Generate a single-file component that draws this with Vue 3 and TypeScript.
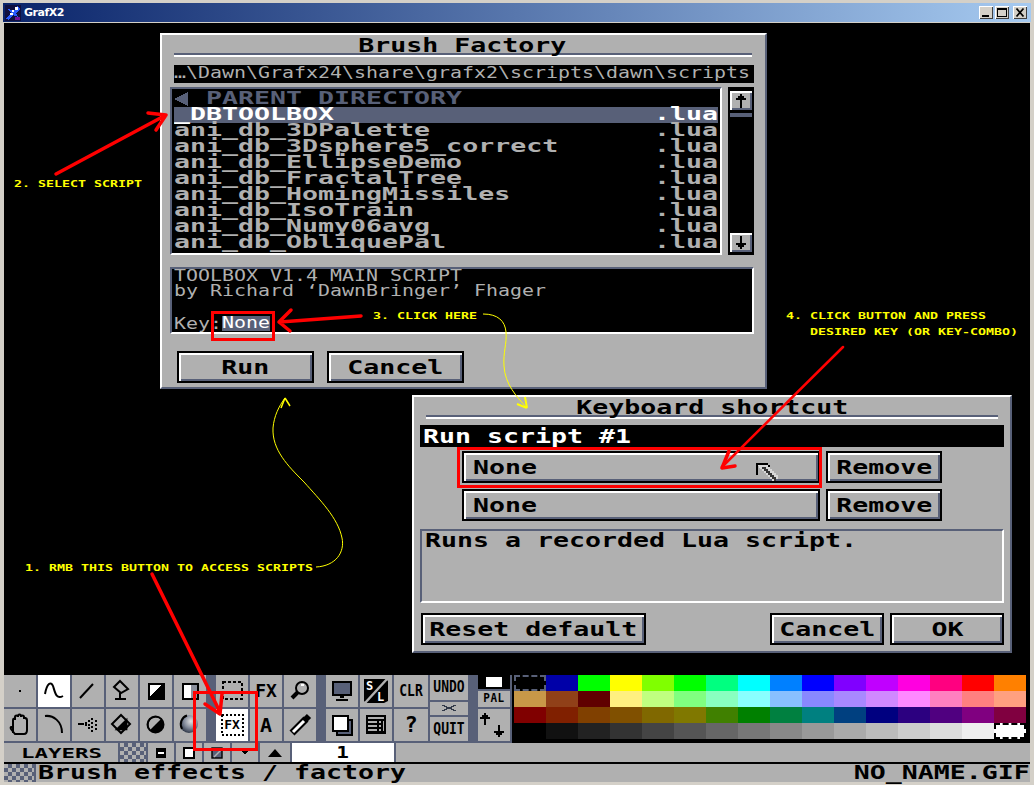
<script setup lang="ts">
const files = [
  'ani_db_3DPalette',
  'ani_db_3Dsphere5_correct',
  'ani_db_EllipseDemo',
  'ani_db_FractalTree',
  'ani_db_HomingMissiles',
  'ani_db_IsoTrain',
  'ani_db_Numy06avg',
  'ani_db_ObliquePal'
]

const palette = [
  '#000000', '#0000a8', '#00ff00', '#ffff00', '#80ff00', '#00ff00', '#00ff80', '#00ffff',
  '#0080ff', '#0000ff', '#8000ff', '#c000ff', '#ff00e0', '#ff0080', '#ff0000', '#ff8000',
  '#c89848', '#904018', '#600000', '#fff080', '#c0ff80', '#80ff80', '#88ffc0', '#88ffff',
  '#88c0ff', '#8888ff', '#a888ff', '#d088ff', '#ff88ff', '#ff80c0', '#ff8080', '#ffa080',
  '#800000', '#802000', '#804000', '#805000', '#806800', '#807800', '#408000', '#008000',
  '#008040', '#008080', '#004080', '#000080', '#2c0080', '#500080', '#800080', '#800040',
  '#000000', '#111111', '#222222', '#333333', '#444444', '#555555', '#666666', '#777777',
  '#888888', '#999999', '#aaaaaa', '#bbbbbb', '#cccccc', '#dddddd', '#eeeeee', '#ffffff'
]
</script>

<template>
  <div class="win">
    <div class="titlebar">
      <svg class="appicon" viewBox="0 0 16 16" shape-rendering="crispEdges">
        <rect width="16" height="16" fill="#101040" />
        <path d="M1 14 L6 8 L3 4 L9 6 L12 1 L15 4 L11 8 L13 12 L8 10 L4 15Z" fill="#2a5cff" />
        <path d="M10 2h3v3h-3zM5 8h3v2H5zM7 5h2v2H7z" fill="#fff" />
        <path d="M10 12h5v3h-5z" fill="#70109a" />
      </svg>
      <span class="apptitle">GrafX2</span>
      <div class="winbtns">
        <div class="wb"><svg viewBox="0 0 14 13" shape-rendering="crispEdges"><path d="M3 9h7v2H3z" /></svg></div>
        <div class="wb"><svg viewBox="0 0 14 13" shape-rendering="crispEdges"><path d="M2 2h10v9H2zM3 4v6h8V4z" fill-rule="evenodd" /></svg></div>
        <div class="wb close"><svg viewBox="0 0 14 13"><path d="M3.500 2.500l7 8M10.500 2.500l-7 8" stroke="#000" stroke-width="1.800" /></svg></div>
      </div>
    </div>

    <div class="client">
      <div class="canvas"></div>

      <div class="toolbar">
        <div class="tools six">
          <div class="c"><svg class="ic" viewBox="0 0 32 32" shape-rendering="crispEdges"><rect x="15" y="15" width="2" height="2" /></svg></div>
          <div class="c sel"><svg class="ic" viewBox="0 0 32 32"><path d="M7 19C9 8 13 6 15 11C17 17 18 25 25 21" class="ln" /></svg></div>
          <div class="c"><svg class="ic" viewBox="0 0 32 32"><path d="M8 23L21 9" class="ln" /></svg></div>
          <div class="c"><svg class="ic" viewBox="0 0 32 32"><path d="M14 6L22 14L15 18L8 12ZM14 18V23M9 24H20" class="ln" /></svg></div>
          <div class="c"><svg class="ic" viewBox="0 0 32 32" shape-rendering="crispEdges"><rect x="8" y="8" width="17" height="17" /><path d="M10 10h11L10 21z" fill="#fff" /></svg></div>
          <div class="c"><svg class="ic" viewBox="0 0 32 32" shape-rendering="crispEdges"><rect x="8" y="8" width="17" height="17" /><rect x="10" y="10" width="7" height="13" fill="#fff" /><rect x="17" y="10" width="6" height="13" fill="#8a8f9c" /></svg></div>
          <div class="c"><svg class="ic" viewBox="0 0 32 32"><path d="M9 24V11C9 9 11 9 11 11V8C11 6 14 6 14 8V7C14 5 17 5 17 7V8C17 6 20 6 20 8V10C20 8 23 9 23 11V21C23 24 22 25 20 25H11L7 20C6 18 8 17 9 19" class="ln" /></svg></div>
          <div class="c"><svg class="ic" viewBox="0 0 32 32"><path d="M7 7C15 6 24 12 24 24" class="ln" /></svg></div>
          <div class="c"><svg class="ic" viewBox="0 0 32 32" shape-rendering="crispEdges"><path d="M6 14h6v2H6zM13 13h2v4h-2zM16 11h2v2h-2zM16 15h2v2h-2zM16 18h2v2h-2zM19 9h2v2h-2zM19 13h2v2h-2zM19 17h2v2h-2zM19 21h2v2h-2zM23 11h2v2h-2zM23 15h2v2h-2zM23 19h2v2h-2z" /></svg></div>
          <div class="c"><svg class="ic" viewBox="0 0 32 32"><path d="M15 6L24 15L15 24L6 15Z" fill="none" stroke="#000" stroke-width="2" /><path d="M15 6L24 15L15 24Z" transform="rotate(45 15 15)" /></svg></div>
          <div class="c"><svg class="ic" viewBox="0 0 32 32"><circle cx="15.500" cy="15.500" r="8" fill="#000" /><path d="M10 21C7 16 9 10 14 9C17 8 19 9 21 10Z" fill="#b0b0b0" /><circle cx="15.500" cy="15.500" r="8" fill="none" stroke="#000" stroke-width="2" /></svg></div>
          <div class="c">
            <svg class="ic" viewBox="0 0 32 32">
              <defs>
                <radialGradient id="ball" cx="0.6" cy="0.35" r="0.7">
                  <stop offset="0" stop-color="#e0e0e0" />
                  <stop offset="0.55" stop-color="#808898" />
                  <stop offset="1" stop-color="#283040" />
                </radialGradient>
              </defs>
              <circle cx="15" cy="15" r="9" fill="url(#ball)" />
              <path d="M8 20C5 14 8 8 13 6.500" fill="none" stroke="#000" stroke-width="2" />
            </svg>
          </div>
        </div>

        <div class="tools three">
          <div class="c"><svg class="ic" viewBox="0 0 32 32" shape-rendering="crispEdges"><rect x="7" y="7" width="19" height="17" fill="none" stroke="#000" stroke-width="2" stroke-dasharray="3 2" /></svg></div>
          <div class="c"><span class="fx">FX</span></div>
          <div class="c"><svg class="ic" viewBox="0 0 32 32"><circle cx="18" cy="13" r="6" fill="#b0b0b0" stroke="#000" stroke-width="2" /><path d="M14 17L8 23" stroke="#000" stroke-width="4" /><path d="M17 10h3" stroke="#fff" stroke-width="2" /></svg></div>
          <div class="c sel">
            <svg class="ic" viewBox="0 0 32 32" shape-rendering="crispEdges"><rect x="6" y="6" width="21" height="20" fill="none" stroke="#000" stroke-width="2" stroke-dasharray="2 2" /></svg>
            <span class="fx small">FX</span>
          </div>
          <div class="c"><span class="fx big">A</span></div>
          <div class="c"><svg class="ic" viewBox="0 0 32 32"><path d="M8 24L22 10" stroke="#000" stroke-width="7" /><path d="M9 23L20 12" stroke="#fff" stroke-width="3" /><path d="M21 11L25 7" stroke="#000" stroke-width="6" /></svg></div>
        </div>

        <div class="tools sys">
          <div class="c"><svg class="ic" viewBox="0 0 32 32" shape-rendering="crispEdges"><rect x="6" y="6" width="20" height="15" /><rect x="8" y="8" width="16" height="11" fill="#586078" /><path d="M14 21h4v2h-4zM10 24h12v2H10z" /></svg></div>
          <div class="c">
            <svg class="ic" viewBox="0 0 32 32">
              <path d="M4 4H26L28 6V26L24 28H6L4 26Z" />
              <path d="M27 4L5 28" stroke="#b0b0b0" stroke-width="2.500" />
              <text x="6" y="15" class="sl">S</text>
              <text x="17" y="26" class="sl">L</text>
            </svg>
          </div>
          <div class="c wide"><span class="mini">CLR</span></div>
          <div class="c"><svg class="ic" viewBox="0 0 32 32" shape-rendering="crispEdges"><rect x="11" y="11" width="15" height="15" fill="#586078" stroke="#000" stroke-width="2" /><rect x="7" y="7" width="15" height="15" fill="#fff" stroke="#000" stroke-width="2" /></svg></div>
          <div class="c"><svg class="ic" viewBox="0 0 32 32" shape-rendering="crispEdges"><rect x="6" y="6" width="20" height="19" /><path d="M8 8h16v2H8zM8 12h9v2H8zM8 16h9v2H8zM8 20h9v2H8zM19 12h2v2h-2zM19 16h2v2h-2zM19 20h2v2h-2zM23 12h1v10h-1z" fill="#b0b0b0" /></svg></div>
          <div class="c wide"><span class="fx q">?</span></div>
        </div>

        <div class="undo">
          <div class="c u1"><span class="mini">UNDO</span></div>
          <div class="c u2"><svg width="16" height="8" viewBox="0 0 16 8" shape-rendering="crispEdges"><path d="M1 1h3v1h2v1h4V2h2V1h3v1h-2v1h-2v2h2v1h2v1h-3V6h-2V5H6v1H4v1H1V6h2V5h2V3H3V2H1z" fill="#303848" /></svg></div>
          <div class="c u1"><span class="mini">QUIT</span></div>
        </div>

        <div class="pal-side">
          <div class="fore"><div class="fore-box"></div></div>
          <div class="c pal-label"><span class="mini tiny">PAL</span></div>
          <div class="c pal-arrows">
            <svg viewBox="0 0 32 32" width="32" height="32" shape-rendering="crispEdges"><path d="M7 4h2v2h2v2h2v2H9v6H7v-6H3V8h2V6h2zM21 16h2v6h4v2h-2v2h-2v2h-2v-2h-2v-2h-2v-2h4z" transform="translate(-1 0)" /></svg>
          </div>
        </div>

        <div class="palette">
          <div
            v-for="(col, i) in palette"
            :key="i"
            class="sw"
            :class="{ 'sw-first': i === 0, 'sw-last': i === 63 }"
            :style="{ background: col }"
          ></div>
        </div>
      </div>

      <div class="layers">
        <div class="lay-title"><span class="t lay">LAYERS</span></div>
        <div class="lay-check"></div>
        <div class="lb"><svg width="12" height="12" viewBox="0 0 12 12" shape-rendering="crispEdges"><rect x="1" y="1" width="10" height="10" rx="1" /><rect x="3" y="5" width="6" height="2" fill="#fff" /></svg></div>
        <div class="lb"><svg width="12" height="12" viewBox="0 0 12 12" shape-rendering="crispEdges"><rect x="1" y="1" width="10" height="10" fill="#fff" stroke="#000" stroke-width="2" /></svg></div>
        <div class="lb"><svg width="12" height="12" viewBox="0 0 12 12"><rect x="1" y="1" width="10" height="10" fill="#586078" stroke="#000" stroke-width="1.400" /><path d="M3 10L10 3" stroke="#b0b0b0" stroke-width="1.400" /></svg></div>
        <div class="lb"><svg width="14" height="12" viewBox="0 0 14 12" shape-rendering="crispEdges"><path d="M1 1h12L7 8z" /><rect x="2" y="1" width="10" height="2" /></svg></div>
        <div class="lb lb-last"><svg width="14" height="12" viewBox="0 0 14 12"><path d="M0 10L7 2L14 10z" /></svg></div>
        <div class="lay-num"><span class="t c-t">1</span></div>
        <div class="lay-rest"></div>
      </div>

      <div class="status">
        <div class="stat-check"></div>
        <span class="t">Brush effects / factory</span>
        <span class="t end">NO_NAME.GIF</span>
      </div>
    </div>

    <div class="dlg brush">
      <div class="dtitle"><span class="t c-t">Brush Factory</span></div>
      <div class="sep"></div>
      <div class="path"><span class="t narrow thin">…\Dawn\Grafx24\share\grafx2\scripts\dawn\scripts</span></div>
      <div class="files">
        <div class="list">
          <div class="row parent">
            <svg class="back" viewBox="0 0 16 16" shape-rendering="crispEdges"><path d="M0 8L14 1V15Z" fill="#586078" /></svg>
            <span class="t">PARENT DIRECTORY</span>
          </div>
          <div class="row current">
            <span class="t">_DBTOOLBOX</span>
            <span class="t end">.lua</span>
          </div>
          <div v-for="f in files" :key="f" class="row">
            <span class="t">{{ f }}</span>
            <span class="t end">.lua</span>
          </div>
        </div>
        <div class="scroll">
          <div class="sbtn"><svg width="14" height="15" viewBox="0 0 14 15" shape-rendering="crispEdges"><path d="M6 1h2v2h2v2h2v2H8v8H6V7H2V5h2V3h2z" /></svg></div>
          <div class="thumb"></div>
          <div class="sbtn last"><svg width="14" height="15" viewBox="0 0 14 15" shape-rendering="crispEdges"><path d="M6 1h2v7h4v2h-2v2H8v2H6v-2H4v-2H2V8h4z" /></svg></div>
        </div>
      </div>
      <div class="desc">
        <div class="dline first"><span class="t narrow thin">TOOLBOX V1.4 MAIN SCRIPT</span></div>
        <div class="dline"><span class="t narrow thin">by Richard ‘DawnBringer’ Fhager</span></div>
        <div class="dline"></div>
        <div class="dline">
          <div class="keylabel"><span class="t narrow thin">Key:</span></div>
          <div class="keyval"><span class="t narrow thin">None</span></div>
        </div>
      </div>
      <div class="actions">
        <div class="btn b137"><span class="t c-t">Run</span></div>
        <div class="btn b137"><span class="t c-t">Cancel</span></div>
      </div>
    </div>

    <div class="dlg keys">
      <div class="dtitle"><span class="t c-t">Keyboard shortcut</span></div>
      <div class="sep"></div>
      <div class="cmd"><span class="t">Run script #1</span></div>
      <div class="keyrow">
        <div class="btn keybtn"><span class="t">None</span></div>
        <div class="btn remove"><span class="t c-t">Remove</span></div>
      </div>
      <div class="keyrow second">
        <div class="btn keybtn"><span class="t">None</span></div>
        <div class="btn remove"><span class="t c-t">Remove</span></div>
      </div>
      <div class="help"><span class="t">Runs a recorded Lua script.</span></div>
      <div class="foot">
        <div class="btn reset"><span class="t c-t">Reset default</span></div>
        <div class="btn b114 push"><span class="t c-t">Cancel</span></div>
        <div class="btn b114"><span class="t c-t">OK</span></div>
      </div>
    </div>

    <svg class="marks" viewBox="0 0 1034 785" width="1034" height="785">
      <g fill="none" stroke="#ffff00" stroke-width="1">
        <path d="M316 567C336 566 345 552 342 538C338 518 320 500 304 482C288 466 272 450 273 428C274 416 279 406 285 398" />
        <path d="M285 398L281 408M285 398L290 406" stroke-width="1.500" />
        <path d="M483 314C498 314 505 321 506 332C507 344 503 352 504 366C505 384 516 396 527 408" />
        <path d="M527 408L517 404M527 408L525 397" stroke-width="2" />
      </g>
      <g fill="none" stroke="#ff0000" stroke-width="3">
        <rect x="212.500" y="312.500" width="61" height="27" />
        <rect x="458.500" y="448.500" width="362" height="38" />
        <rect x="194.500" y="692.500" width="62" height="57" />
      </g>
      <g fill="none" stroke="#ff0000" stroke-width="3.500" stroke-linecap="round">
        <path d="M152 574L220 712M220 714L205 704M220 714L222 694" />
        <path d="M56 174L166 115M166 115L148 113M166 115L156 130" />
        <path d="M361 316L280 322M279 322L291 310M279 322L290 331" />
        <path d="M843 347L722 467" stroke-width="2.500" />
        <path d="M722 468L735 466M722 468L729 451" />
      </g>
      <g shape-rendering="crispEdges">
        <path d="M756 463h12v2h2v2h-2v-2h-10v10h-2z" fill="#000" />
        <path d="M758 465h10v2h2v2h2v2h2v2h2v2h2v4h-2v2h-4v-2h-2v-2h-2v-2h-2v-2h-2v-2h-2v-2h-2z" fill="#d8d8d8" />
        <path d="M760 467h2v2h2v2h2v2h2v2h2v2h2v2h2v2h2v-4h-2v-2h-2v-2h-2v-2h-2v-2h-2v-2h-6z" fill="#000" opacity="0.75" />
      </g>
    </svg>

    <span class="note n2">2. SELECT SCRIPT</span>
    <span class="note n3">3. CLICK HERE</span>
    <span class="note n4a">4. CLICK BUTTON AND PRESS</span>
    <span class="note n4b">DESIRED KEY (OR KEY-COMBO)</span>
    <span class="note n1">1. RMB THIS BUTTON TO ACCESS SCRIPTS</span>
  </div>
</template>

<style>
body {
  margin: 0;
  background: #000;
}
</style>

<style scoped>
.win {
  position: relative;
  width: 1034px;
  height: 785px;
  overflow: hidden;
  box-sizing: border-box;
  padding: 3px 4px 3px 4px;
  background: #d4d0c8;
  display: flex;
  flex-direction: column;
  font-family: 'Liberation Sans', sans-serif;
}

.titlebar {
  flex: none;
  height: 19px;
  margin: 0 -1px 1px -1px;
  padding-left: 2px;
  display: flex;
  align-items: center;
  background: linear-gradient(90deg, #0a246a, #a6caf0);
}

.appicon {
  width: 16px;
  height: 16px;
}

.apptitle {
  margin-left: 3px;
  font-family: 'DejaVu Sans', sans-serif;
  color: #fff;
  font-size: 11px;
  font-weight: bold;
  letter-spacing: -0.5px;
}

.winbtns {
  margin-left: auto;
  margin-right: 4px;
  display: flex;
  gap: 2px;
}

.wb {
  box-sizing: border-box;
  width: 14px;
  height: 13px;
  background: #d4d0c8;
  box-shadow: inset 1px 1px 0 #fff, inset -1px -1px 0 #404040;
}

.wb svg {
  display: block;
  width: 14px;
  height: 13px;
}

.close {
  margin-left: 2px;
}

.client {
  flex: 1;
  min-height: 0;
  display: flex;
  flex-direction: column;
  background: #000;
}

.canvas {
  flex: 1;
  background: #000;
}

/* the pixel font is wider than anything installed: stretch a mono face to its 16px grid */
.t {
  display: inline-block;
  font-family: 'DejaVu Sans Mono', 'Liberation Mono', monospace;
  font-size: 19px;
  font-weight: bold;
  line-height: 16px;
  white-space: pre;
  transform: scaleX(1.3986);
  transform-origin: left center;
}

.c-t {
  transform-origin: center;
}

.end {
  margin-left: auto;
  transform-origin: right center;
}

/* 12px grid used by the path and description texts */
.narrow {
  font-size: 16.5px;
  transform: scaleX(1.208);
}

.thin {
  font-weight: normal;
}

.toolbar {
  flex: none;
  height: 68px;
  display: flex;
  background: #586078;
}

.tools {
  display: grid;
  grid-template-rows: 32px 32px;
  gap: 2px;
  margin-right: 10px;
}

.six {
  grid-template-columns: repeat(6, 32px);
}

.three {
  grid-template-columns: repeat(3, 32px);
}

.sys {
  grid-template-columns: 32px 32px 34px;
  margin-right: 2px;
}

.c {
  position: relative;
  display: flex;
  align-items: center;
  justify-content: center;
  background: #b0b0b0;
  color: #000;
}

.sel {
  background: #fff;
}

.ic {
  width: 32px;
  height: 32px;
  display: block;
}

.ln {
  fill: none;
  stroke: #000;
  stroke-width: 2;
}

.fx {
  font-family: 'DejaVu Sans Mono', monospace;
  font-size: 18px;
  font-weight: bold;
  line-height: 18px;
}

.fx.small {
  position: absolute;
  inset: 0;
  display: flex;
  align-items: center;
  justify-content: center;
  font-size: 13px;
}

.fx.big {
  font-size: 20px;
}

.fx.q {
  font-size: 22px;
}

.sl {
  font-family: 'DejaVu Sans Mono', monospace;
  font-size: 12px;
  font-weight: bold;
  fill: #fff;
}

.mini {
  font-family: 'DejaVu Sans Mono', monospace;
  font-size: 13px;
  font-weight: bold;
  line-height: 14px;
  color: #000;
  display: inline-block;
  transform: scaleY(1.15);
}

.mini.tiny {
  font-size: 11px;
  letter-spacing: 0.5px;
}

.undo {
  width: 38px;
  margin-right: 10px;
  display: flex;
  flex-direction: column;
  gap: 2px;
  height: 66px;
}

.u1 {
  flex: 1;
}

.u2 {
  flex: none;
  height: 13px;
}

.pal-side {
  width: 32px;
  margin-right: 2px;
  height: 66px;
  display: flex;
  flex-direction: column;
  gap: 2px;
}

.fore {
  height: 14px;
  background: #000;
  display: flex;
  align-items: center;
  justify-content: center;
}

.fore-box {
  width: 16px;
  height: 10px;
  background: #fff;
}

.pal-label {
  height: 16px;
}

.pal-arrows {
  flex: 1;
}

.palette {
  flex: 1;
  height: 68px;
  box-sizing: border-box;
  padding: 0 0 4px 2px;
  background: #000;
  display: grid;
  grid-template-columns: repeat(16, 32px);
  grid-auto-rows: 16px;
}

.sw {
  box-sizing: border-box;
}

.sw-first {
  border: 2px dashed #586078;
}

.sw-last {
  border: 2px dashed #000;
}

.layers {
  flex: none;
  height: 19px;
  display: flex;
  gap: 2px;
  background: #586078;
}

.lay-title {
  width: 114px;
  background: #b0b0b0;
  padding-left: 17px;
  box-sizing: border-box;
  display: flex;
  align-items: center;
}

.lay {
  font-size: 14px;
  transform: scaleX(1.6);
}

.lay-check,
.stat-check {
  background: repeating-conic-gradient(#586078 0 25%, #b0b0b0 0 50%) 0 0 / 8px 8px;
}

.lay-check {
  width: 26px;
}

.lb {
  width: 26px;
  background: #b0b0b0;
  display: flex;
  align-items: center;
  justify-content: center;
}

.lb-last {
  width: 30px;
}

.lay-num {
  width: 102px;
  background: #fff;
  display: flex;
  align-items: center;
  justify-content: center;
}

.lay-num .t {
  font-size: 15px;
}

.lay-rest {
  flex: 1;
  background: #b0b0b0;
}

.status {
  flex: none;
  height: 18px;
  margin-top: 2px;
  padding-bottom: 2px;
  box-sizing: border-box;
  display: flex;
  align-items: center;
  background: #b0b0b0;
  color: #000;
}

.stat-check {
  width: 30px;
  height: 16px;
  margin-right: 2px;
  padding-top: 2px;
  border-right: 2px solid #586078;
  margin-bottom: -2px;
}

.dlg {
  position: absolute;
  box-sizing: border-box;
  display: flex;
  flex-direction: column;
  background: #b0b0b0;
  border-top: 2px solid #fff;
  border-left: 2px solid #fff;
  border-bottom: 2px solid #586078;
  border-right: 2px solid #586078;
  color: #000;
}

.brush {
  left: 160px;
  top: 33px;
  width: 607px;
  height: 356px;
  padding: 0 11px 0 8px;
}

.keys {
  left: 412px;
  top: 395px;
  width: 600px;
  height: 258px;
  padding: 0 6px;
}

.dtitle {
  flex: none;
  height: 16px;
  margin-top: 2px;
  display: flex;
  justify-content: center;
}

.sep {
  flex: none;
  height: 4px;
  box-sizing: border-box;
  border-top: 2px solid #586078;
  border-bottom: 2px solid #fff;
  margin: 0 2px 0 4px;
}

.keys .sep {
  margin: 0 6px;
}

.path {
  flex: none;
  height: 18px;
  margin: 8px 0 4px 4px;
  display: flex;
  background: #000;
  color: #b0b0b0;
}

.files {
  flex: none;
  display: flex;
  gap: 6px;
  height: 168px;
}

.list {
  flex: none;
  width: 552px;
  box-sizing: border-box;
  padding: 2px;
  background: #000;
  border-top: 2px solid #586078;
  border-left: 2px solid #586078;
  border-bottom: 2px solid #fff;
  border-right: 2px solid #fff;
  color: #b0b0b0;
}

.row {
  height: 16px;
  display: flex;
  align-items: center;
}

/* smaller face so the underscores stay inside their own row */
.row .t {
  font-size: 17px;
  line-height: 15px;
  margin-bottom: 1px;
  transform: scaleX(1.564);
}

.current {
  background: #586078;
  color: #fff;
}

.parent {
  color: #586078;
}

.back {
  width: 16px;
  height: 16px;
  margin-right: 16px;
}

.scroll {
  flex: none;
  width: 26px;
  box-sizing: border-box;
  padding: 4px 2px 3px;
  background: #000;
  display: flex;
  flex-direction: column;
}

.sbtn {
  height: 19px;
  display: flex;
  align-items: center;
  justify-content: center;
  background: #b0b0b0;
  box-shadow: inset 2px 2px 0 #fff, inset -2px -2px 0 #586078;
}

.sbtn.last {
  margin-top: auto;
}

.thumb {
  height: 4px;
  margin-top: 3px;
  background: #586078;
}

.desc {
  flex: none;
  height: 67px;
  margin-top: 12px;
  box-sizing: border-box;
  padding: 0 2px;
  background: #000;
  border-top: 2px solid #586078;
  border-left: 2px solid #586078;
  border-bottom: 2px solid #fff;
  border-right: 2px solid #fff;
  color: #b0b0b0;
}

.dline {
  height: 16px;
  display: flex;
}

.dline.first {
  height: 14px;
}

.dline.first .t {
  line-height: 14px;
}

.keylabel {
  width: 48px;
}

.keyval {
  width: 48px;
  height: 15px;
  margin-top: 1px;
  background: #586078;
  color: #fff;
}

.keyval .t {
  display: block;
  line-height: 14px;
}

.actions {
  flex: none;
  display: flex;
  gap: 13px;
  margin: 17px 0 0 7px;
}

.btn {
  flex: none;
  box-sizing: border-box;
  display: flex;
  align-items: center;
  justify-content: center;
  height: 32px;
  padding-bottom: 1px;
  background: #b0b0b0;
  border: 2px solid #000;
  box-shadow: inset 2px 2px 0 #fff, inset -2px -2px 0 #586078;
}

.b137 {
  width: 137px;
}

.b114 {
  width: 114px;
}

.cmd {
  flex: none;
  height: 22px;
  margin-top: 6px;
  padding-left: 3px;
  display: flex;
  align-items: center;
  background: #000;
  color: #fff;
}

.keyrow {
  flex: none;
  display: flex;
  gap: 6px;
  margin: 4px 0 0 42px;
}

.keyrow.second {
  margin-top: 6px;
}

.keybtn {
  width: 358px;
  justify-content: flex-start;
  padding-left: 9px;
}

.remove {
  width: 116px;
}

.help {
  flex: none;
  height: 74px;
  margin-top: 8px;
  box-sizing: border-box;
  padding: 1px 3px;
  display: flex;
  border-top: 2px solid #586078;
  border-left: 2px solid #586078;
  border-bottom: 2px solid #fff;
  border-right: 2px solid #fff;
}

.foot {
  flex: none;
  display: flex;
  gap: 6px;
  margin-top: 10px;
  padding-left: 1px;
}

.reset {
  width: 225px;
}

.push {
  margin-left: auto;
}

.marks {
  position: absolute;
  left: 0;
  top: 0;
  pointer-events: none;
}

.note {
  position: absolute;
  font-family: 'DejaVu Sans Mono', monospace;
  font-size: 9.5px;
  font-weight: bold;
  line-height: 10px;
  color: #ffff00;
  white-space: pre;
  transform: scaleX(1.3986);
  transform-origin: left center;
}

.n1 {
  left: 25px;
  top: 563px;
}

.n2 {
  left: 14px;
  top: 179px;
}

.n3 {
  left: 373px;
  top: 311px;
}

.n4a {
  left: 786px;
  top: 311px;
}

.n4b {
  left: 810px;
  top: 327px;
}
</style>
